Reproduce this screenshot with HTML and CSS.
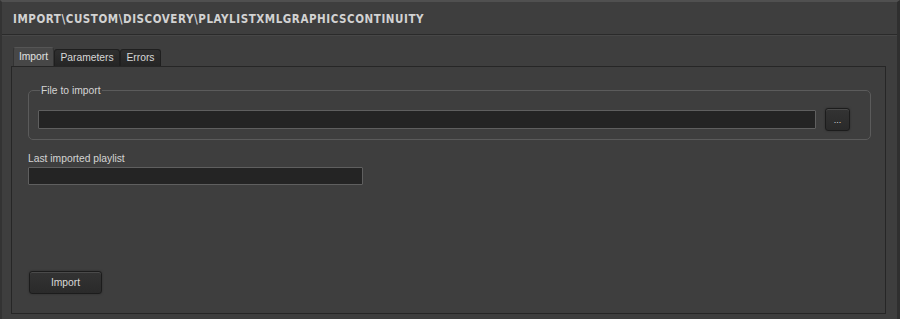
FILE: index.html
```html
<!DOCTYPE html>
<html>
<head>
<meta charset="utf-8">
<link rel="stylesheet" href="styles.css">
</head>
<body>
<div class="window">
  <div class="header"><span class="title">IMPORT\CUSTOM\DISCOVERY\PLAYLISTXMLGRAPHICSCONTINUITY</span></div>
  <div class="body">
    <div class="tabs">
      <div class="tab active">Import</div>
      <div class="tab">Parameters</div>
      <div class="tab">Errors</div>
    </div>
    <div class="panel">
      <fieldset class="group">
        <legend>File to import</legend>
        <div class="row">
          <div class="input wide"></div>
          <button class="btn browse">...</button>
        </div>
      </fieldset>
      <div class="field">
        <div class="label">Last imported playlist</div>
        <div class="input last"></div>
      </div>
      <button class="btn import">Import</button>
    </div>
  </div>
</div>
</body>
</html>
```
FILE: styles.css
```css
html, body {
  margin: 0;
  padding: 0;
  background: #3e3e3e;
}
body {
  width: 900px;
  height: 319px;
  overflow: hidden;
  font-family: "Liberation Sans", Arial, sans-serif;
  font-size: 10.3px;
  color: #d6d6d6;
}
.window {
  box-sizing: border-box;
  width: 900px;
  height: 319px;
  border-top: 2px solid #505050;
  border-left: 2px solid #333333;
  border-right: 3px solid #2f2f2f;
  display: flex;
  flex-direction: column;
}
.header {
  height: 32px;
  border-bottom: 1px solid #2a2a2a;
  box-shadow: 0 1px 0 #474747;
  display: flex;
  align-items: center;
  padding-left: 11px;
}
.title {
  font-family: "DejaVu Sans Condensed", "DejaVu Sans", sans-serif;
  font-weight: bold;
  font-size: 11.5px;
  letter-spacing: 0.56px;
  color: #d2d2d2;
  margin-top: 2px;
}
.body {
  flex: 1;
  display: flex;
  flex-direction: column;
  padding: 12px 11px 5px 9px;
}
.tabs {
  display: flex;
  align-items: flex-end;
  height: 19px;
  padding-left: 2px;
}
.tab {
  box-sizing: border-box;
  height: 17px;
  line-height: 16px;
  text-align: center;
  background: linear-gradient(#2f2f2f, #252525);
  border: 1px solid #1f1f1f;
  border-bottom: none;
  border-radius: 3px 3px 0 0;
  color: #d8d8d8;
}
.tab:nth-child(1) { width: 41px; }
.tab:nth-child(2) { width: 66px; }
.tab:nth-child(3) { width: 41px; }
.tab.active {
  height: 19px;
  line-height: 17px;
  background: #474747;
  border-color: #333333;
  border-top-color: #555555;
  color: #e0e0e0;
}
.panel {
  flex: 1;
  border: 1px solid #262626;
  display: flex;
  flex-direction: column;
  padding: 0 14px 19px 16px;
}
.group {
  margin: 18px 0 0 0;
  padding: 12px 20px 8px 9px;
  border: 1px solid #5b5b5b;
  border-radius: 5px;
  min-width: 0;
}
.group legend {
  margin-left: 2px;
  padding: 0 1px;
  color: #d4d4d4;
}
.row {
  display: flex;
  align-items: center;
  gap: 9px;
}
.input {
  box-sizing: border-box;
  height: 19px;
  background: #242424;
  border: 1px solid #5f5f5f;
  border-radius: 1px;
}
.wide { flex: 1; }
.btn {
  box-sizing: border-box;
  font-family: "Liberation Sans", Arial, sans-serif;
  font-size: 10.3px;
  color: #d8d8d8;
  background: linear-gradient(#333333, #2a2a2a);
  border: 1px solid #1c1c1c;
  border-radius: 3px;
  box-shadow: inset 0 1px 0 #4a4a4a, 0 0 2px #2c2c2c;
  padding: 0;
}
.browse {
  width: 25px;
  height: 23px;
  line-height: 20px;
  font-size: 9px;
}
.field {
  margin-top: 12px;
}
.label {
  line-height: 14px;
  color: #d4d4d4;
}
.last {
  width: 335px;
  height: 18px;
  margin-top: 1px;
}
.import {
  margin-top: auto;
  margin-left: 1px;
  width: 73px;
  height: 23px;
}
```
